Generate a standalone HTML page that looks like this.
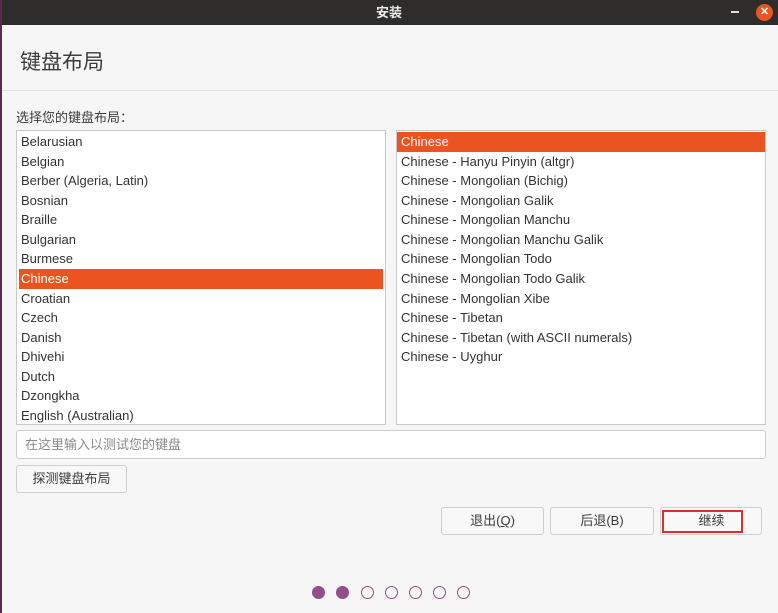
<!DOCTYPE html>
<html><head><meta charset="utf-8"><style>
*{margin:0;padding:0;box-sizing:border-box}
body{width:778px;height:613px;overflow:hidden;background:#f6f6f6;font-family:"Liberation Sans","Noto Sans CJK SC",sans-serif;font-size:13px;color:#3c3c3c;position:relative}
.abs{position:absolute}
.tb{left:0;top:0;width:778px;height:25px;background:#2e2d2b;color:#eee;font-weight:bold;text-align:center;line-height:25px;font-size:13px}
.edge{left:0;top:0;width:2px;height:613px;background:#5e2750}
.list{background:#fff;border:1px solid #c8c8c8;top:130px;height:295px;padding-top:1px}
.row{height:19.57px;line-height:19.5px;padding-left:4px;color:#333}
.sel{background:#e95420;color:#fff}
.btn{border:1px solid #cfcfcf;border-radius:3px;background:#f8f8f8;text-align:center;color:#3c3c3c}
.dot{width:13px;height:13px;border-radius:50%;top:586px;border:1.5px solid #924d8b}
</style></head><body>
<div class="abs tb">安装</div>
<div class="abs" style="left:731px;top:11px;width:8px;height:1.5px;background:#ddd"></div>
<div class="abs" style="left:756px;top:4px;width:17px;height:17px;border-radius:50%;background:#e95420;color:#fff;font-size:11px;text-align:center;line-height:17px;font-weight:bold">✕</div>
<div class="abs edge"></div>
<div class="abs" style="left:20px;top:46px;font-size:21px;color:#3c3c3c">键盘布局</div>
<div class="abs" style="left:2px;top:90px;width:776px;height:1px;background:#e2e2e2"></div>
<div class="abs" style="left:16px;top:107px;font-size:13px">选择您的键盘布局：</div>
<div class="abs list" style="left:16px;width:370px">
<div class="row">Belarusian</div><div class="row">Belgian</div><div class="row">Berber (Algeria, Latin)</div><div class="row">Bosnian</div><div class="row">Braille</div><div class="row">Bulgarian</div><div class="row">Burmese</div><div class="row sel" style="margin:0 2px;padding-left:2px">Chinese</div><div class="row">Croatian</div><div class="row">Czech</div><div class="row">Danish</div><div class="row">Dhivehi</div><div class="row">Dutch</div><div class="row">Dzongkha</div><div class="row">English (Australian)</div>
</div>
<div class="abs list" style="left:396px;width:370px">
<div class="row sel">Chinese</div><div class="row">Chinese - Hanyu Pinyin (altgr)</div><div class="row">Chinese - Mongolian (Bichig)</div><div class="row">Chinese - Mongolian Galik</div><div class="row">Chinese - Mongolian Manchu</div><div class="row">Chinese - Mongolian Manchu Galik</div><div class="row">Chinese - Mongolian Todo</div><div class="row">Chinese - Mongolian Todo Galik</div><div class="row">Chinese - Mongolian Xibe</div><div class="row">Chinese - Tibetan</div><div class="row">Chinese - Tibetan (with ASCII numerals)</div><div class="row">Chinese - Uyghur</div>
</div>
<div class="abs" style="left:16px;top:430px;width:750px;height:29px;background:#fff;border:1px solid #cdcdcd;border-radius:3px;padding-left:8px;line-height:27px;color:#8a8a8a">在这里输入以测试您的键盘</div>
<div class="abs btn" style="left:16px;top:465px;width:111px;height:28px;line-height:26px">探测键盘布局</div>
<div class="abs btn" style="left:441px;top:507px;width:103px;height:28px;line-height:26px">退出(<u>Q</u>)</div>
<div class="abs btn" style="left:550px;top:507px;width:104px;height:28px;line-height:26px">后退(B)</div>
<div class="abs btn" style="left:660px;top:507px;width:102px;height:28px;line-height:26px"></div>
<div class="abs" style="left:662px;top:510px;width:81px;height:23px;border:2.5px solid #d9302b;text-align:center;line-height:18px;padding-left:18px">继续</div>
<div class="abs dot" style="left:312px;background:#924d8b"></div>
<div class="abs dot" style="left:336px;background:#924d8b"></div>
<div class="abs dot" style="left:361px"></div>
<div class="abs dot" style="left:385px"></div>
<div class="abs dot" style="left:409px"></div>
<div class="abs dot" style="left:433px"></div>
<div class="abs dot" style="left:457px"></div>
</body></html>
